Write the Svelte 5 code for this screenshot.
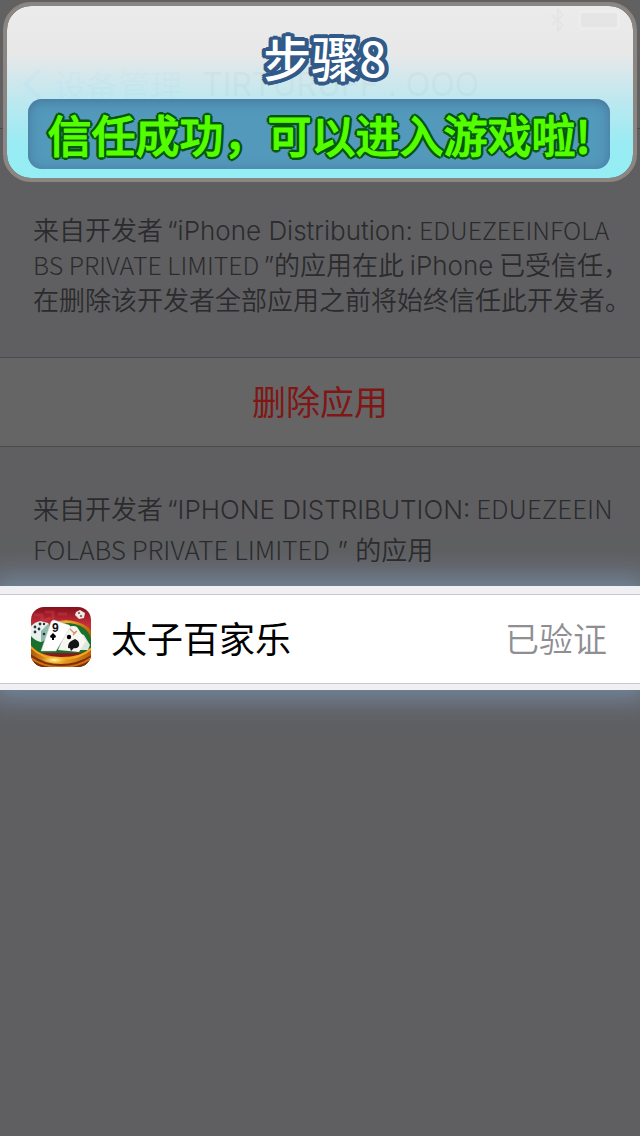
<script>
  const notice = [
    [{ t: '来自开发者' }, { t: '“iPhone Distribution:', c: 'wide' }, { t: 'EDUEZEEINFOLA', c: 'name' }],
    [{ t: 'BS PRIVATE LIMITED', c: 'name first' }, { t: '”', c: 'wide' }, { t: '的应用在此 ' }, { t: 'iPhone', c: 'latin' }, { t: ' 已受信任，' }],
    [{ t: '在删除该开发者全部应用之前将始终信任此开发者。' }]
  ];
  const group = [
    [{ t: '来自开发者' }, { t: '“IPHONE DISTRIBUTION:', c: 'wide' }, { t: 'EDUEZEEIN', c: 'name' }],
    [{ t: 'FOLABS PRIVATE LIMITED', c: 'name first' }, { t: ' ” ', c: 'latin' }, { t: '的应用' }]
  ];
</script>

<div class="screen">
  <header class="nav">
    <div class="status">
      <svg width="16" height="24" viewBox="0 0 16 24" aria-hidden="true"><path d="M2 7l11 10-5 5V2l5 5L2 17" fill="none" stroke="currentColor" stroke-width="2" /></svg>
      <span class="battery"></span>
    </div>
    <div class="bar">
      <button class="back" type="button">
        <svg width="24" height="34" viewBox="0 0 24 34" aria-hidden="true"><path d="M20 3L5 17l15 14" fill="none" stroke="currentColor" stroke-width="4" /></svg>
        设备管理
      </button>
      <span class="heading">TIRTURUFF . OOO</span>
    </div>
  </header>

  <section class="banner">
    <h1>步骤8</h1>
    <p>信任成功，可以进入游戏啦!</p>
  </section>

  <main>
    <p class="copy notice">
      {#each notice as line}
        <span class="line">{#each line as part}<span class={part.c}>{part.t}</span>{/each}</span>
      {/each}
    </p>

    <button class="remove" type="button">删除应用</button>

    <p class="copy group">
      {#each group as line}
        <span class="line">{#each line as part}<span class={part.c}>{part.t}</span>{/each}</span>
      {/each}
    </p>

    <div class="spot">
      <div class="app">
        <svg class="icon" viewBox="0 0 60 60" aria-hidden="true">
          <defs>
            <clipPath id="tile"><rect width="60" height="60" rx="13" /></clipPath>
            <linearGradient id="red" x1="0" y1="0" x2="0" y2="1"><stop offset="0" stop-color="#83101b" /><stop offset=".3" stop-color="#c92e3c" /><stop offset="1" stop-color="#6d1010" /></linearGradient>
            <linearGradient id="gold" x1="0" y1="0" x2="1" y2="0"><stop offset="0" stop-color="#a5510b" /><stop offset=".4" stop-color="#f3b02c" /><stop offset="1" stop-color="#b85a08" /></linearGradient>
            <radialGradient id="shine"><stop offset="0" stop-color="#fffbc0" /><stop offset="1" stop-color="#ffc528" stop-opacity="0" /></radialGradient>
          </defs>
          <g clip-path="url(#tile)">
            <rect width="60" height="60" fill="url(#red)" />
            <path d="M3 8h8v6M14 5h8v7M27 7h9M12 14l8-3" fill="none" stroke="#e35b61" stroke-width="3" opacity=".25" />
            <path d="M17 17q22-9 40 3 4 4 5 9l-3 4q-4-13-18-16-12-2-24 3z" fill="url(#gold)" />
            <path d="M0 30l10-9 9-3q22-5 34 3 6 5 7 11v14H0z" fill="#17702c" />
            <path d="M-1 38q10 12 31 12t31-9v19H-1z" fill="#7c3008" />
            <path d="M-2 36q10 14 32 14t32-11v8q-15 10-32 10T-2 46z" fill="url(#gold)" />
            <path d="M-1 39q11 13 31 13t31-11" fill="none" stroke="#f9a51d" stroke-width="2" />
            <path d="M0 51q12 9 30 9t30-9" fill="none" stroke="#d36d10" stroke-width="2" />
            <ellipse cx="23" cy="53" rx="13" ry="4" fill="url(#shine)" />
            <path d="M0 19q4-4 9-5l8 2q2 6-1 12-3 6-6 7-6-1-10-6z" fill="#e9f1ef" />
            <path d="M10 24l8-8q1 7-1 12-3 6-7 7z" fill="#8fb8ac" />
            <g fill="#263633"><circle cx="4" cy="20" r="1.4" /><circle cx="9" cy="17" r="1.4" /><circle cx="13" cy="17" r="1.2" /><circle cx="4" cy="25" r="1.4" /><circle cx="8" cy="22" r="1.4" /><circle cx="13" cy="27" r="1.3" /></g>
            <path d="M37 43l9-18 7 3 6 10-2 5z" fill="#dce5e0" />
            <path d="M27 43l10-23q6-2 9 0l9 14-7 11z" fill="#f7f6f1" />
            <path d="M10 44l10-29q1-2 3-2l15 5q2 1 1 3L25 44z" fill="#fff" stroke="#c0c9c5" stroke-width=".5" />
            <text x="21" y="25" font-size="12" font-family="Liberation Sans, sans-serif" font-weight="700" fill="#111">9</text>
            <path d="M22 26l3 3q0 2-2 2v2h-2v-2q-2 0-2-2z" />
            <path d="M37 40q0-5 5-7l2-1q5 2 4 7-2 3-5 2l-3 3-1-3q-2 1-2-1z" fill="#131515" />
            <circle cx="38" cy="30" r="2.2" />
            <path d="M39 22l4 4 3-2M42 28l3-3" stroke="#d98a70" stroke-width="1.2" fill="none" />
            <path d="M45 5l4-2 5 3-1 5-5 1-4-4z" fill="#f0e8e2" /><circle cx="48" cy="6" r="1" fill="#6b4b46" /><circle cx="50" cy="9" r="1" fill="#6b4b46" />
          </g>
        </svg>
        <span class="title">太子百家乐</span>
        <span class="state">已验证</span>
      </div>
    </div>
  </main>
</div>

<style>
  :global(body) {
    background: #5f5f61;
  }
  .screen {
    position: relative;
    min-height: 100vh;
    background: #5f5f61;
    color: #2b2b2d;
    font-family: Inter, "Noto Sans CJK SC", sans-serif;
    overflow: hidden;
  }
  p, h1 {
    margin: 0;
  }
  button {
    font: inherit;
    border: 0;
    background: none;
    padding: 0;
  }
  .nav {
    box-sizing: border-box;
    height: 129px;
    border-bottom: 1px solid #4b4b4d;
    background: #616162;
  }
  .status {
    display: flex;
    justify-content: flex-end;
    align-items: center;
    gap: 12px;
    height: 40px;
    padding: 0 20px;
    color: #111;
  }
  .battery {
    width: 36px;
    height: 14px;
    border: 3px solid #858585;
    background: #111;
    border-radius: 4px;
  }
  .bar {
    display: flex;
    align-items: center;
    gap: 20px;
    height: 88px;
    padding: 0 20px;
    font-size: 32px;
    white-space: nowrap;
  }
  .back {
    display: flex;
    align-items: center;
    gap: 10px;
    color: #0d3c66;
  }
  .heading {
    color: #111;
  }
  .banner {
    position: absolute;
    top: 2px;
    left: 3px;
    right: 3px;
    box-sizing: border-box;
    height: 180px;
    padding: 20px 23px 0 21px;
    border: 4px solid #8b8682;
    border-radius: 28px;
    background: linear-gradient(#f6f6f7ed 0, #f2f2f3ed 28%, #c6f2faed 54%, #9ef6ffed 80%, #98f9ffed 100%);
    background-clip: padding-box;
    font-family: "Noto Sans CJK SC", sans-serif;
    text-align: center;
    white-space: nowrap;
  }
  h1 {
    padding-left: 12px;
    font-size: 48px;
    line-height: 60px;
    font-weight: 500;
    color: #fff;
    text-shadow:
      4px 0 #315a88, -4px 0 #315a88, 0 4px #315a88, 0 -4px #315a88,
      3px 3px #315a88, -3px 3px #315a88, 3px -3px #315a88, -3px -3px #315a88,
      4px 2px #315a88, -4px 2px #315a88, 4px -2px #315a88, -4px -2px #315a88,
      2px 0 #315a88, -2px 0 #315a88, 0 2px #315a88, 0 -2px #315a88;
  }
  .banner p {
    margin-top: 13px;
    border-radius: 14px;
    background: #5399bb;
    box-shadow: inset 0 2px 12px #47739b;
    font-size: 44px;
    line-height: 70px;
    font-weight: 500;
    color: #5f0;
    -webkit-text-stroke: 1px #5f0;
    text-shadow:
      3px 0 #03560b, -3px 0 #03560b, 0 3px #03560b, 0 -3px #03560b,
      2px 2px #03560b, -2px 2px #03560b, 2px -2px #03560b, -2px -2px #03560b;
  }
  .copy {
    padding: 0 0 0 33px;
    font-size: 26px;
    font-family: "Noto Sans CJK SC", sans-serif;
    font-weight: 350;
    white-space: nowrap;
  }
  .line {
    display: block;
    line-height: 35px;
  }
  .line span {
    line-height: 1;
  }
  .wide, .latin {
    font-family: "Inter", sans-serif;
    font-weight: 350;
  }
  .wide {
    padding-left: 4px;
  }
  .name {
    padding-left: 6px;
    font-weight: 300;
  }
  .name.first {
    padding-left: 0;
  }
  .notice .name {
    font-size: 25px;
  }
  .notice {
    padding-top: 82px;
    padding-bottom: 41px;
  }
  .remove {
    display: block;
    box-sizing: border-box;
    width: 100%;
    height: 90px;
    padding-bottom: 4px;
    border-top: 1px solid #4b4b4d;
    border-bottom: 1px solid #4b4b4d;
    background: #656565;
    color: #801615;
    font-size: 34px;
  }
  .group {
    padding-top: 40px;
    padding-bottom: 17px;
  }
  .group .line {
    line-height: 41px;
  }
  .spot {
    padding: 8px 0 6px;
    background: #efeff4;
    box-shadow: 0 0 26px 9px #7489a0;
  }
  .app {
    display: flex;
    align-items: center;
    box-sizing: border-box;
    height: 90px;
    padding: 0 33px 4px 31px;
    border-top: 1px solid #c8c7cc;
    border-bottom: 1px solid #c8c7cc;
    background: #fff;
  }
  .icon {
    width: 60px;
    height: 60px;
    margin-right: 20px;
  }
  .title {
    font-size: 36px;
    color: #000;
  }
  .state {
    margin-left: auto;
    font-size: 34px;
    font-weight: 350;
    color: #8e8e93;
  }
</style>
